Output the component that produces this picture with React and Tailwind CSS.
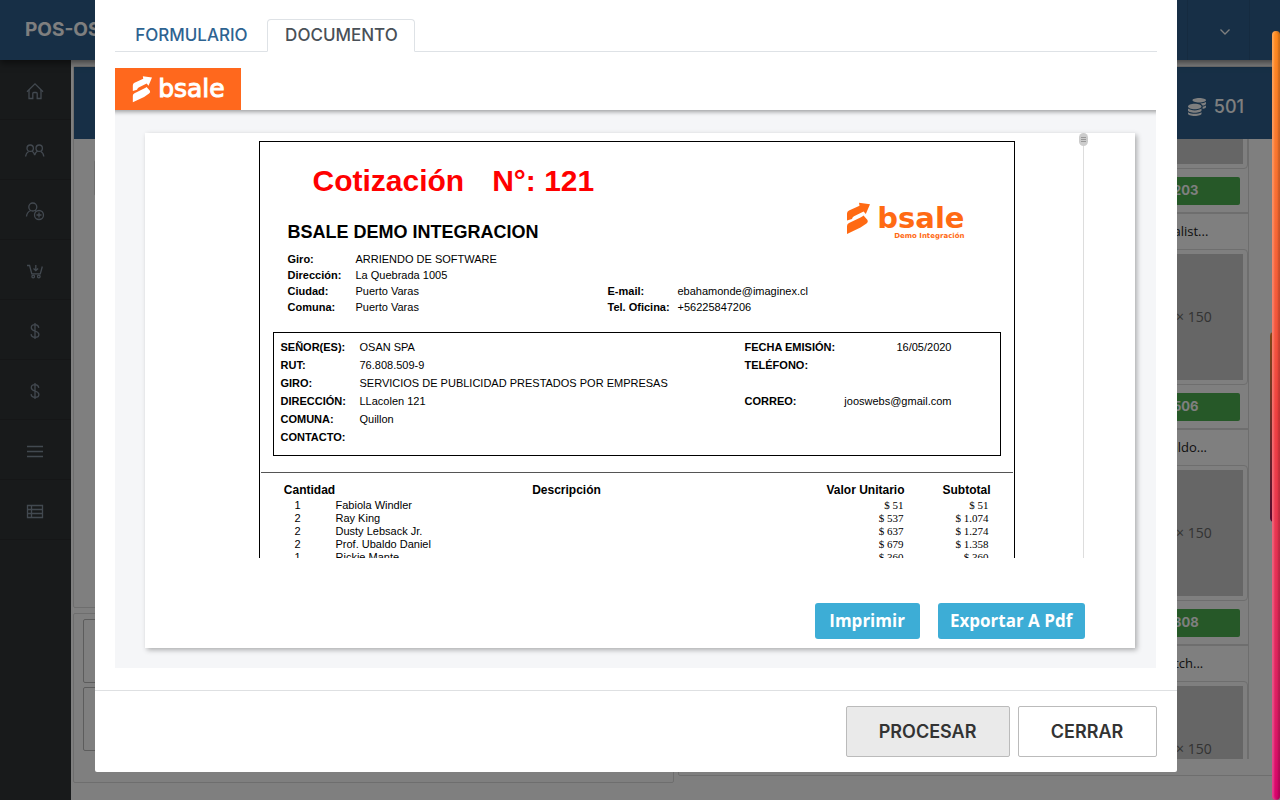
import React from "react";
import { FaCoins } from "react-icons/fa";

const sans = "font-['Inter',sans-serif]";
const noto = "font-['Open_Sans','Noto_Sans',sans-serif]";
const arial = "font-['Liberation_Sans',Arial,sans-serif]";
const times = "font-['Liberation_Serif','Times_New_Roman',serif]";

const icons = {
  Inicio: (
    <>
      <path d="M2 10.8 10 2.8l8 8" />
      <path d="M4 9v8.5h3.8v-5a1 1 0 0 1 1-1h2.400a1 1 0 0 1 1 1v5H16V9" />
    </>
  ),
  Clientes: (
    <>
      <circle cx="5.200" cy="7.200" r="3.200" />
      <circle cx="14.200" cy="7.200" r="3.200" />
      <path d="M.6 15.500c.2-2.500 1.200-4 3-5M6.800 10c1.500.7 2.400 2 2.900 4.200.5-2.200 1.400-3.500 2.900-4.200M15.800 10.500c1.800 1 2.800 2.500 3 5" />
    </>
  ),
  "Nuevo cliente": (
    <>
      <circle cx="7.800" cy="6" r="4" />
      <path d="M1.500 15.500c.3-3 1.800-5 4.300-6M9.800 9.200l1.400.8" />
      <circle cx="14" cy="14" r="4.500" />
      <path d="M14 11.500v5M11.500 14h5" />
    </>
  ),
  Carro: (
    <>
      <path d="M2 4.500h2.600l2.200 8.300h8.500l2-7.300" />
      <path d="M10.800 4v5.500M8.500 7.500l2.300 2.200 2.300-2.200" />
      <circle cx="8.200" cy="15.500" r="1.300" />
      <circle cx="13.800" cy="15.500" r="1.300" />
    </>
  ),
  Ventas: (
    <path d="M10 2v16M13.800 6.800C13.500 4.800 12 3.700 10 3.700S6.300 4.900 6.300 6.700C6.300 8.700 8 9.300 10 10s3.900 1.400 3.900 3.400c0 1.800-1.700 2.900-3.900 2.900s-3.700-1.200-3.900-3.200" />
  ),
  Menu: <path d="M2 5.500h16M2 10.500h16M2 15.500h16" />,
  Tabla: <path d="M2.500 4.500h15v12h-15zM2.500 8.500h15M2.500 12.500h15M6.500 4.500v12" />,
};

const menu = ["Inicio", "Clientes", "Nuevo cliente", "Carro", "Ventas", "Ventas", "Menu", "Tabla"];

function SideMenu() {
  return (
    <nav className="w-[71px] shrink-0 bg-[#303436]">
      {menu.map((name, i) => (
        <a
          key={i}
          href="#"
          aria-label={name}
          className="flex h-[60px] items-center justify-center border-b border-[#2a2d2f] pt-[3px] pr-px text-[#8592a0]"
        >
          <svg viewBox="0 0 20 20" className="size-5" fill="none" stroke="currentColor" strokeWidth="1.3">
            {icons[name]}
          </svg>
        </a>
      ))}
    </nav>
  );
}

const products = [
  { name: "Dusty...", price: "$ 203" },
  { name: "Vocalist...", price: "$ 506" },
  { name: "Ubaldo...", price: "$ 808" },
  { name: "Leitch...", price: "$ 360" },
];

function Product({ name, price }) {
  return (
    <article className="w-[138px] border border-[#dcdcdc]">
      <h3 className={`${noto} flex h-[35px] items-center justify-center text-[13px] text-[#222]`}>{name}</h3>
      <div className="rounded border border-[#dcdcdc] p-1">
        <div className={`${noto} flex h-[126px] items-center justify-center bg-[#ccc] text-sm text-[#666]`}>
          150 × 150
        </div>
      </div>
      <button
        type="button"
        className={`${sans} mx-2 mt-2 mb-[7px] block h-7 w-[120px] rounded-xs bg-[#4cb050] text-[13px] font-bold text-white`}
      >
        {price}
      </button>
    </article>
  );
}

function Page() {
  return (
    <div className="flex min-h-screen flex-col overflow-hidden bg-white">
      <header className="relative z-10 flex h-[60px] items-stretch bg-[#2e5f8c] pr-[30px] shadow-[0_3px_7px_rgba(0,0,0,0.5)]">
        <a href="#" className={`${sans} flex grow items-center pl-[25px] text-[19px] font-bold text-white`}>
          POS-OSAN
        </a>
        <button
          type="button"
          aria-label="Cuenta"
          className="flex w-[63px] items-center justify-center border-x border-[#2a5780] pt-1 pl-3 text-white"
        >
          <svg viewBox="0 0 10 6" className="h-[6px] w-[10px]" fill="none" stroke="currentColor" strokeWidth="1.3">
            <path d="M.5.5 5 5 9.500.5" />
          </svg>
        </button>
      </header>
      <div className="flex grow">
        <SideMenu />
        <main className="flex grow items-start gap-1 pt-[6px] pl-[2px]">
          <div className="flex flex-1 flex-col gap-[5px]">
            <section className="h-[542px] rounded-xs border border-[#dcdcdc]">
              <div className="h-[72px] bg-[#2e5f8c]" />
              <div className="mt-[21px] ml-5 h-9 rounded-xs border border-[#dcdcdc]" />
            </section>
            <section className="flex flex-col gap-1 rounded-xs border border-[#dcdcdc] pt-[5px] pb-[31px] pl-[9px]">
              <div className="h-16 rounded-xs border border-[#b8b8b8]" />
              <div className="h-16 rounded-xs border border-[#b8b8b8]" />
            </section>
          </div>
          <section className="relative flex-1 rounded-xs border border-[#dcdcdc] pb-4">
            <div className="flex h-[72px] items-center justify-end gap-2 bg-[#2e5f8c] pt-2 pr-[35px] text-white">
              <FaCoins className="size-[18px]" />
              <span className={`${sans} text-lg leading-6 font-medium`}>501</span>
            </div>
            <div className="flex h-[620px] flex-col items-end overflow-hidden pr-[30px]">
              <div className="-mt-[142px]">
                {products.map((p) => (
                  <Product key={p.name} {...p} />
                ))}
              </div>
            </div>
            <div className="absolute top-[265px] right-[1px] h-[190px] w-2 rounded bg-linear-to-b from-[#ff9130] to-[#b0105c]" />
          </section>
        </main>
      </div>
    </div>
  );
}

function BsaleMark({ className }) {
  return (
    <svg viewBox="0 0 24 32" className={className} fill="currentColor" aria-hidden="true">
      <path d="M1 18.500V11.500Q1 9.500 3 8.500L13.500 3.800 13 .8 24 2.200 19.800 12 17.600 9.500 8 14.200Q6.500 15 6 17Z" />
      <path d="M17.500 13.500 21.500 18Q22.500 20 20.500 21.500L14.500 25.500 1 32V24Q1 22 3 21L14.500 15.500Q16.500 14.500 17.500 13.500Z" />
    </svg>
  );
}

const company = [
  ["Giro:", "ARRIENDO DE SOFTWARE", "", ""],
  ["Dirección:", "La Quebrada 1005", "", ""],
  ["Ciudad:", "Puerto Varas", "E-mail:", "ebahamonde@imaginex.cl"],
  ["Comuna:", "Puerto Varas", "Tel. Oficina:", "+56225847206"],
];

const client = [
  ["SEÑOR(ES):", "OSAN SPA", "FECHA EMISIÓN:", "16/05/2020"],
  ["RUT:", "76.808.509-9", "TELÉFONO:", ""],
  ["GIRO:", "SERVICIOS DE PUBLICIDAD PRESTADOS POR EMPRESAS", "", ""],
  ["DIRECCIÓN:", "LLacolen 121", "CORREO:", "jooswebs@gmail.com"],
  ["COMUNA:", "Quillon", "", ""],
  ["CONTACTO:", "", "", ""],
];

const lines = [
  ["1", "Fabiola Windler", "$ 51", "$ 51"],
  ["2", "Ray King", "$ 537", "$ 1.074"],
  ["2", "Dusty Lebsack Jr.", "$ 637", "$ 1.274"],
  ["2", "Prof. Ubaldo Daniel", "$ 679", "$ 1.358"],
  ["1", "Rickie Mante", "$ 360", "$ 360"],
];

function Quote() {
  return (
    <div className={`${arial} mx-auto mt-2 w-[756px] border border-b-0 border-black text-[11px] text-black`}>
      <div className="flex justify-between pt-[19px] pr-[49px] pl-7">
        <div>
          <h1 className="flex gap-7 pl-[25px] text-[30px] leading-10 font-bold text-[#f00]">
            <span>Cotización</span>
            <span>N°: 121</span>
          </h1>
          <h2 className="pt-[19px] text-lg leading-6 font-bold">BSALE DEMO INTEGRACION</h2>
        </div>
        <div className="flex items-start gap-[6px] pt-[41px] text-[#ff6a13]">
          <BsaleMark className="h-8 w-[26px]" />
          <div className="flex flex-col items-end pt-px">
            <span className="font-['DejaVu_Sans',sans-serif] text-[29px] leading-[30px] font-bold">bsale</span>
            <span className="font-['DejaVu_Sans',sans-serif] text-[7px] leading-[7px] font-bold">Demo Integración</span>
          </div>
        </div>
      </div>
      <dl className="grid grid-cols-[68px_252px_70px_1fr] pt-[7px] pl-7 leading-4">
        {company.map(([a, b, c, d]) => (
          <React.Fragment key={a}>
            <dt className="font-bold">{a}</dt>
            <dd>{b}</dd>
            <dt className="font-bold">{c}</dt>
            <dd>{d}</dd>
          </React.Fragment>
        ))}
      </dl>
      <dl className="mx-[13px] mt-[17px] grid grid-cols-[79px_385px_97px_110px] border border-black pt-[5px] pb-[9px] pl-[7px] leading-[18px]">
        {client.map(([a, b, c, d]) => (
          <React.Fragment key={a}>
            <dt className="font-bold">{a}</dt>
            <dd>{b}</dd>
            <dt className="font-bold">{c}</dt>
            <dd className="text-right">{d}</dd>
          </React.Fragment>
        ))}
      </dl>
      <div className="mx-px mt-4 border-t border-[#555]" />
      <table className="mt-[9px] ml-6 w-[707px] table-fixed border-collapse leading-[13px]">
        <colgroup>
          <col className="w-[52px]" />
          <col className="w-[462px]" />
          <col className="w-[107px]" />
          <col className="w-[86px]" />
        </colgroup>
        <thead>
          <tr className="text-xs leading-[17px] font-bold">
            <th>Cantidad</th>
            <th>Descripción</th>
            <th className="text-right">Valor Unitario</th>
            <th className="text-right">Subtotal</th>
          </tr>
        </thead>
        <tbody>
          {lines.map(([n, name, unit, total]) => (
            <tr key={name}>
              <td className="pr-6 pl-0 text-center">{n}</td>
              <td>{name}</td>
              <td className={`${times} pr-px text-right`}>{unit}</td>
              <td className={`${times} pr-0.5 text-right`}>{total}</td>
            </tr>
          ))}
        </tbody>
      </table>
    </div>
  );
}

function QuoteDialog() {
  const tab = "flex h-[33px] items-center justify-center rounded-t border text-[17px]";
  const action = `${noto} h-9 rounded-[3px] bg-[#3dadd6] text-[17px] font-bold text-white`;
  const foot = `${sans} h-[51px] rounded-xs border border-[#bbb] text-lg font-semibold text-[#333]`;
  return (
    <div role="dialog" aria-label="Documento" className="w-[85%] rounded-b-xs bg-white">
      <div className="px-5 pt-[19px] pb-[22px]">
        <div role="tablist" className={`${sans} flex border-b border-[#dee2e6]`}>
          <button type="button" role="tab" className={`${tab} -mb-px w-[152px] border-transparent font-medium text-[#2e6391]`}>
            FORMULARIO
          </button>
          <button
            type="button"
            role="tab"
            aria-selected="true"
            className={`${tab} -mb-px w-[148px] border-[#dee2e6] border-b-white bg-white font-medium text-[#495057]`}
          >
            DOCUMENTO
          </button>
        </div>
        <div className="mt-4 flex">
          <div className="flex h-[42px] w-[126px] items-center justify-center gap-[6px] bg-[#ff681d] text-white">
            <BsaleMark className="h-7 w-5" />
            <span className="font-['DejaVu_Sans',sans-serif] text-[25px] leading-7 [-webkit-text-stroke:1px_white]">
              bsale
            </span>
          </div>
        </div>
        <div className="mr-px bg-[#f5f6f8] pt-[23px] pr-[21px] pb-5 pl-[30px] shadow-[inset_0_7px_4px_-5px_rgba(0,0,0,0.35)]">
          <div className="bg-white pr-[50px] pb-[9px] pl-[45px] shadow-[2px_2px_5px_rgba(0,0,0,0.3)]">
            <div className="relative mr-px">
              <div className="h-[425px] overflow-hidden border-r border-[#ddd]">
                <Quote />
              </div>
              <div className="absolute top-0 -right-1 flex h-[13px] w-[9px] flex-col items-center justify-center gap-px rounded-full bg-[#ccc]">
                <i className="h-px w-[5px] bg-[#999]" />
                <i className="h-px w-[5px] bg-[#999]" />
                <i className="h-px w-[5px] bg-[#999]" />
              </div>
            </div>
            <div className="mt-[45px] flex justify-end gap-[18px]">
              <button type="button" className={`${action} w-[105px]`}>
                Imprimir
              </button>
              <button type="button" className={`${action} w-[147px]`}>
                Exportar A Pdf
              </button>
            </div>
          </div>
        </div>
      </div>
      <footer className="flex justify-end gap-2 border-t border-[#dee0e2] px-5 py-[15px]">
        <button type="button" className={`${foot} w-[164px] bg-[#eaeaea]`}>
          PROCESAR
        </button>
        <button type="button" className={`${foot} w-[139px] bg-white`}>
          CERRAR
        </button>
      </footer>
    </div>
  );
}

export default function App() {
  return (
    <>
      <Page />
      <div className="fixed inset-0 z-20 flex items-start justify-center bg-black/50 pr-2">
        <QuoteDialog />
      </div>
      <div className="fixed top-[31px] right-0 bottom-0 z-30 w-2 rounded bg-linear-to-b from-[#ff8a1c] via-[#f04040] to-[#d9006c] shadow-[inset_2px_0_2px_rgba(255,255,255,0.25),inset_-2px_0_2px_rgba(0,0,0,0.2)]" />
    </>
  );
}
